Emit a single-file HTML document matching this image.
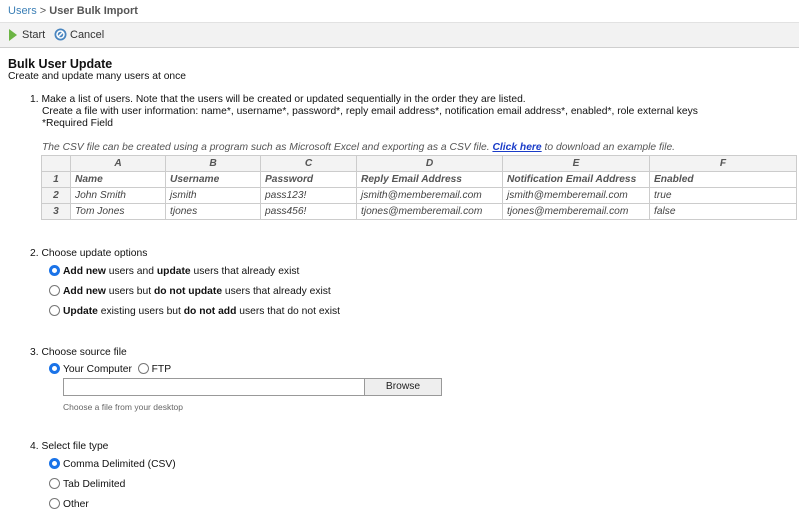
<!DOCTYPE html>
<html><head><style>
body{margin:0;width:799px;height:519px;overflow:hidden;font-family:"Liberation Sans",sans-serif;font-size:10.3px;color:#111;background:#fff;position:relative}
.a{position:absolute;white-space:nowrap}
table{border-collapse:collapse;position:absolute;left:41px;top:155px;font-size:10.2px;font-style:italic;color:#444}
td{border:1px solid #ccc;height:15px;padding:0 4px}
tr.h td{background:#f3f3f3;text-align:center;font-weight:bold;color:#555}
td.n{background:#f3f3f3;text-align:center;font-weight:bold;color:#555}
.r{display:inline-block;width:11px;height:11px;border:1px solid #777;border-radius:50%;vertical-align:-2px;margin-right:3px;box-sizing:border-box;background:#fff}
.r.on{border:3px solid #1a73e8;background:#fff}
</style></head><body>
<div class="a" style="left:0;top:0;width:799px;height:22px;background:#fff;border-bottom:1px solid #e2e2e2"></div>
<div class="a" style="left:8px;top:5px;font-size:11px;color:#555"><span style="color:#3b7fb6">Users</span> &gt; <b>User Bulk Import</b></div>
<div class="a" style="left:0;top:23px;width:799px;height:24px;background:#f2f2f2;border-bottom:1px solid #cfcfcf"></div>
<svg class="a" style="left:8px;top:29px" width="10" height="12"><path d="M1 0L9 6L1 12Z" fill="#6cb544"/></svg>
<div class="a" style="left:22px;top:29px;color:#333;font-size:11px">Start</div>
<svg class="a" style="left:54px;top:28px" width="13" height="13"><circle cx="6.5" cy="6.5" r="6" fill="#4a86c0"/><circle cx="6.5" cy="6.5" r="3.5" fill="none" stroke="#fff" stroke-width="1.5"/><path d="M4 9L9 4" stroke="#fff" stroke-width="1.5"/></svg>
<div class="a" style="left:70px;top:29px;color:#333;font-size:11px">Cancel</div>
<div class="a" style="left:8px;top:57px;font-size:12.5px;font-weight:bold">Bulk User Update</div>
<div class="a" style="left:8px;top:71px">Create and update many users at once</div>
<div class="a" style="left:30px;top:94px">1. Make a list of users. Note that the users will be created or updated sequentially in the order they are listed.</div>
<div class="a" style="left:42px;top:106px">Create a file with user information: name*, username*, password*, reply email address*, notification email address*, enabled*, role external keys</div>
<div class="a" style="left:42px;top:118px">*Required Field</div>
<div class="a" style="left:42px;top:142px;font-style:italic;color:#555">The CSV file can be created using a program such as Microsoft Excel and exporting as a CSV file. <span style="color:#1a3cc8;text-decoration:underline;font-weight:bold">Click here</span> to download an example file.</div>
<table>
<tr class="h"><td style="width:20px"></td><td style="width:86px">A</td><td style="width:86px">B</td><td style="width:87px">C</td><td style="width:137px">D</td><td style="width:138px">E</td><td style="width:138px">F</td></tr>
<tr style="font-weight:bold;color:#555"><td class="n">1</td><td>Name</td><td>Username</td><td>Password</td><td>Reply Email Address</td><td>Notification Email Address</td><td>Enabled</td></tr>
<tr><td class="n">2</td><td>John Smith</td><td>jsmith</td><td>pass123!</td><td>jsmith@memberemail.com</td><td>jsmith@memberemail.com</td><td>true</td></tr>
<tr><td class="n">3</td><td>Tom Jones</td><td>tjones</td><td>pass456!</td><td>tjones@memberemail.com</td><td>tjones@memberemail.com</td><td>false</td></tr>
</table>
<div class="a" style="left:30px;top:248px">2. Choose update options</div>
<div class="a" style="left:49px;top:265px"><span class="r on"></span><b>Add new</b> users and <b>update</b> users that already exist</div>
<div class="a" style="left:49px;top:285px"><span class="r"></span><b>Add new</b> users but <b>do not update</b> users that already exist</div>
<div class="a" style="left:49px;top:305px"><span class="r"></span><b>Update</b> existing users but <b>do not add</b> users that do not exist</div>
<div class="a" style="left:30px;top:347px">3. Choose source file</div>
<div class="a" style="left:49px;top:363px"><span class="r on"></span>Your Computer &nbsp;<span class="r"></span>FTP</div>
<div class="a" style="left:63px;top:378px;width:302px;height:16px;border:1px solid #999;background:#fff"></div>
<div class="a" style="left:364px;top:378px;width:76px;height:16px;border:1px solid #999;background:#eee;text-align:center;line-height:16px;color:#222">Browse</div>
<div class="a" style="left:63px;top:402px;font-size:8.5px;color:#666">Choose a file from your desktop</div>
<div class="a" style="left:30px;top:441px">4. Select file type</div>
<div class="a" style="left:49px;top:458px"><span class="r on"></span>Comma Delimited (CSV)</div>
<div class="a" style="left:49px;top:478px"><span class="r"></span>Tab Delimited</div>
<div class="a" style="left:49px;top:498px"><span class="r"></span>Other</div>
</body></html>
